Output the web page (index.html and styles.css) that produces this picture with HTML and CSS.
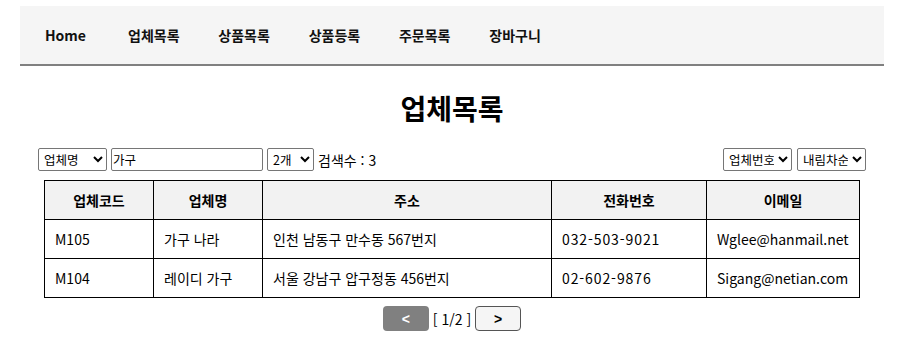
FILE: index.html
```html
<!DOCTYPE html>
<html lang="ko">
<head>
  <meta charset="UTF-8" />
  <meta name="viewport" content="width=device-width, initial-scale=1.0"/>
  <title>업체목록</title>
  <link rel="stylesheet" href="styles.css">
</head>
<body>
  <nav class="menu">
    <a href="#" class="home">Home</a>
    <a href="#">업체목록</a>
    <a href="#">상품목록</a>
    <a href="#">상품등록</a>
    <a href="#">주문목록</a>
    <a href="#">장바구니</a>
  </nav>

  <h1>업체목록</h1>

  <div class="search">
    <div class="search-left">
      <select class="sel-field">
        <option>업체명</option>
      </select>
      <input type="text" class="keyword" value="가구">
      <select class="sel-size">
        <option>2개</option>
      </select>
      <span class="count">검색수 : 3</span>
    </div>
    <div class="search-right">
      <select class="sel-sort">
        <option>업체번호</option>
      </select>
      <select class="sel-sort">
        <option>내림차순</option>
      </select>
    </div>
  </div>

  <table class="list">
    <thead>
      <tr>
        <th class="c-code">업체코드</th>
        <th class="c-name">업체명</th>
        <th class="c-addr">주소</th>
        <th class="c-tel">전화번호</th>
        <th class="c-mail">이메일</th>
      </tr>
    </thead>
    <tbody>
      <tr>
        <td>M105</td>
        <td>가구 나라</td>
        <td>인천 남동구 만수동 567번지</td>
        <td class="num">032-503-9021</td>
        <td>Wglee@hanmail.net</td>
      </tr>
      <tr>
        <td>M104</td>
        <td>레이디 가구</td>
        <td>서울 강남구 압구정동 456번지</td>
        <td class="num">02-602-9876</td>
        <td>Sigang@netian.com</td>
      </tr>
    </tbody>
  </table>

  <div class="paging">
    <button class="prev">&lt;</button>
    <span class="page">[ 1/2 ]</span>
    <button class="next">&gt;</button>
  </div>
</body>
</html>
```

FILE: styles.css
```css
body {
  margin: 6px 19px 0 20px;
  font-family: "Noto Sans CJK KR", "Noto Sans", sans-serif;
  color: #000;
  background: #fff;
}

.menu {
  display: flex;
  align-items: center;
  height: 58px;
  background: #f5f5f5;
  border-bottom: 2px solid #808080;
  padding-left: 25px;
}

.menu a {
  font-size: 14px;
  font-weight: bold;
  color: #111;
  text-decoration: none;
  margin-right: 38.8px;
}

.menu .home {
  margin-right: 42px;
}

h1 {
  text-align: center;
  font-size: 28px;
  margin: 22px 0 20px;
  line-height: 40px;
}

.search {
  display: flex;
  justify-content: space-between;
  align-items: center;
  margin: 0 18px 0 18px;
}

.search-left,
.search-right {
  display: flex;
  align-items: center;
  gap: 4px;
}

.search-right {
  gap: 5px;
}

.search select,
.search input {
  font-family: "Noto Sans CJK KR", sans-serif;
  font-size: 12.5px;
  height: 23px;
  padding: 0 1px;
  border: 1px solid #767676;
  border-radius: 2px;
  background: #fff;
  color: #000;
  box-sizing: border-box;
}

.sel-field {
  width: 69px;
}

.keyword {
  width: 152px;
}

.sel-size {
  width: 47px;
}

.sel-sort {
  width: 69px;
}

.count {
  font-size: 14px;
}

.list {
  border-collapse: collapse;
  margin: 9px auto 0;
  width: 816px;
  font-size: 14px;
}

.list th,
.list td {
  border: 1px solid #000;
  height: 38px;
  padding: 0 10px;
}

.list th {
  background: #f2f2f2;
  text-align: center;
  font-weight: bold;
}

.list td {
  text-align: left;
}

.list .num {
  letter-spacing: 0.9px;
}

.c-code { width: 88px; }
.c-name { width: 88px; }
.c-addr { width: 268px; }
.c-tel { width: 134px; }

.paging {
  display: flex;
  justify-content: center;
  align-items: center;
  gap: 4px;
  margin-top: 8px;
}

.paging button {
  width: 46px;
  height: 25px;
  border-radius: 4px;
  font-weight: bold;
  font-size: 14px;
  cursor: pointer;
}

.prev {
  background: #808080;
  color: #fff;
  border: none;
}

.next {
  background: #f5f5f5;
  color: #000;
  border: 1px solid #555;
}

.page {
  font-size: 14px;
}
```
